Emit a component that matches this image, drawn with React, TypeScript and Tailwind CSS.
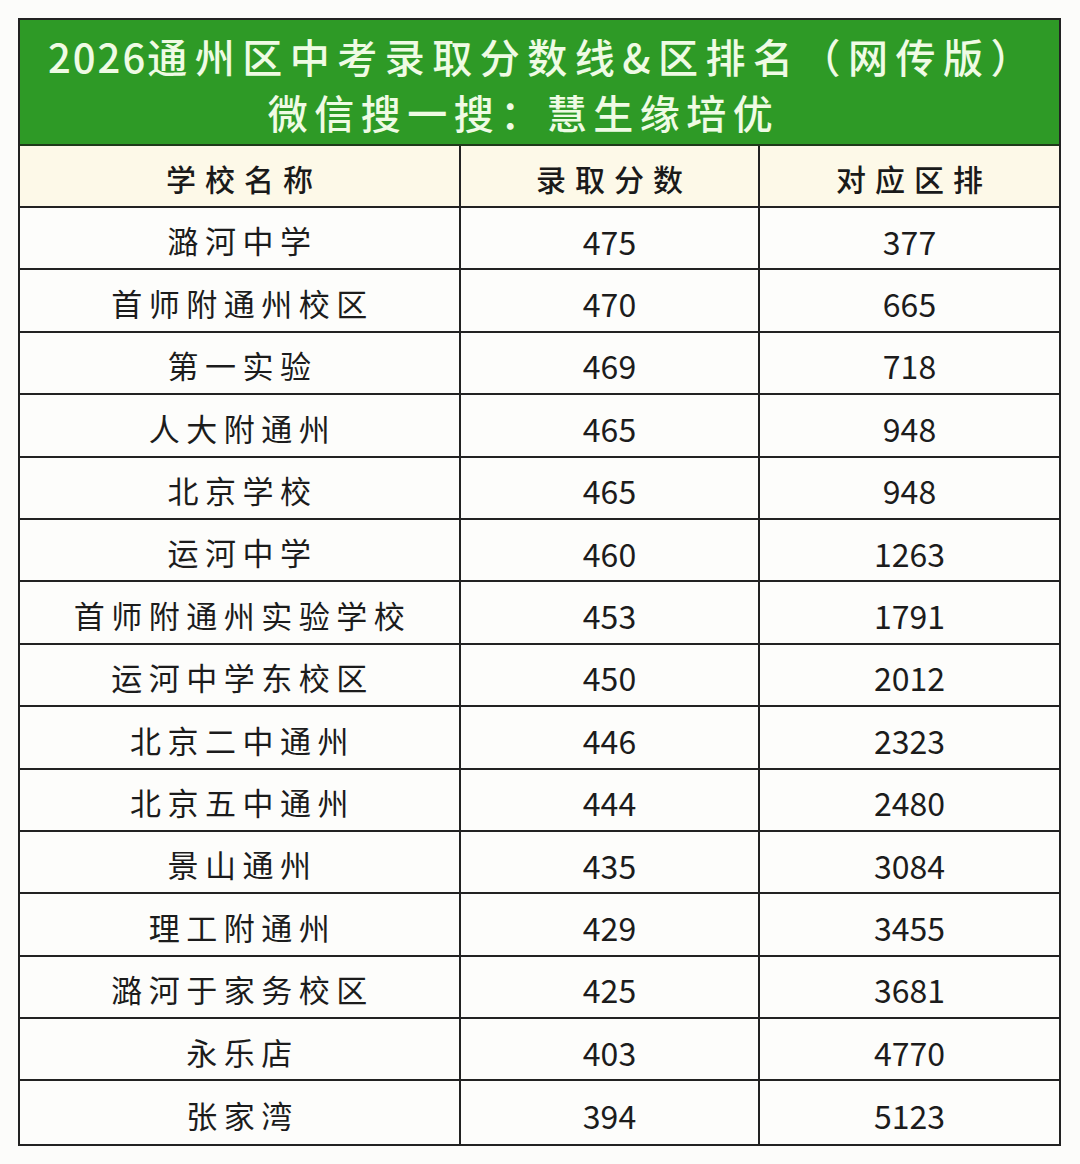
import React from 'react';

const rows: [string, number, number][] = [
  ['潞河中学', 475, 377],
  ['首师附通州校区', 470, 665],
  ['第一实验', 469, 718],
  ['人大附通州', 465, 948],
  ['北京学校', 465, 948],
  ['运河中学', 460, 1263],
  ['首师附通州实验学校', 453, 1791],
  ['运河中学东校区', 450, 2012],
  ['北京二中通州', 446, 2323],
  ['北京五中通州', 444, 2480],
  ['景山通州', 435, 3084],
  ['理工附通州', 429, 3455],
  ['潞河于家务校区', 425, 3681],
  ['永乐店', 403, 4770],
  ['张家湾', 394, 5123],
];

const font = { fontFamily: '"Noto Sans CJK SC", "Noto Sans", sans-serif' };

const App = () => {
  return (
    <div className="min-h-[1164px] w-[1080px] bg-[#fcfcfa] pt-[18px] pl-[18px]" style={font}>
      <div className="w-[1043px] border-2 border-[#222]">
        {/* title */}
        <div className="h-[126px] bg-[#2e9a26] border-b-2 border-[#1f3a1a] flex flex-col items-center justify-center pt-[4px] text-[#effbe4] font-medium">
          <div className="text-[40px] leading-[56px] tracking-[7.5px] pl-[7px]">
            <span className="tracking-[2px]">2026</span>通州区中考录取分数线&amp;区排名（网传版）
          </div>
          <div className="text-[40px] leading-[56px] tracking-[6.5px] pr-[32px]">微信搜一搜：慧生缘培优</div>
        </div>

        {/* column header */}
        <div className="grid grid-cols-[441px_299px_1fr] h-[62px] bg-[#fdf9e8] border-b-2 border-[#222] text-[#1a1a1a] text-[30px] font-medium tracking-[9px]">
          <div className="border-r-2 border-[#222] flex items-center justify-center pl-[9px] pt-[5px]">学校名称</div>
          <div className="border-r-2 border-[#222] flex items-center justify-center pl-[9px] pt-[5px]">录取分数</div>
          <div className="flex items-center justify-center pl-[9px] pt-[5px]">对应区排</div>
        </div>

        {rows.map(([name, score, rank], i) => (
          <div
            key={i}
            className={`grid grid-cols-[441px_299px_1fr] h-[62.4px] bg-[#fdfdfb] text-[#1c1c1c] ${
              i < rows.length - 1 ? 'border-b-2 border-[#222]' : ''
            }`}
          >
            <div className="border-r-2 border-[#222] flex items-center justify-center text-[31px] tracking-[6.5px] pl-[6px] pt-[5px]">{name}</div>
            <div className="border-r-2 border-[#222] flex items-center justify-center text-[32px] pt-[5px]">{score}</div>
            <div className="flex items-center justify-center text-[32px] pt-[5px]">{rank}</div>
          </div>
        ))}
      </div>
    </div>
  );
};

export default App;
